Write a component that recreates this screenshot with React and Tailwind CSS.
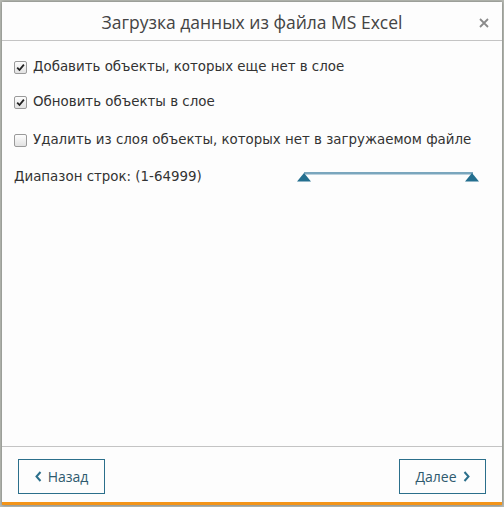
import React from "react";

function Check({ checked }) {
  return (
    <span className="w-[13px] h-[13px] shrink-0 rounded-[2px] border border-[#9a9a9a] bg-gradient-to-b from-[#fdfdfd] to-[#e2e2e2] flex items-center justify-center">
      {checked && (
        <svg width="9" height="9" viewBox="0 0 9 9">
          <path d="M1.2 4.6 L3.5 7 L7.9 1.6" fill="none" stroke="#222" strokeWidth="1.8" />
        </svg>
      )}
    </span>
  );
}

function Row({ checked, children, className }) {
  return (
    <div className={"flex items-center gap-[6px] h-[20px] " + className}>
      <Check checked={checked} />
      <span>{children}</span>
    </div>
  );
}

export default function App() {
  return (
    <div className="w-[504px] h-[507px] bg-[#b9bcb5] p-[2px] pb-[2px]" style={{ fontFamily: "'DejaVu Sans', Verdana, sans-serif" }}>
      <div className="w-[500px] h-[503px] bg-[#fdfdfd] flex flex-col shadow-[0_0_3px_rgba(0,0,0,0.4)]">
        <div className="h-[39px] border-b border-[#c4c4c4] flex items-center justify-center relative shrink-0">
          <span className="text-[17.5px] text-[#444] pt-[3px]" style={{ fontFamily: "'Open Sans', sans-serif" }}>
            Загрузка данных из файла MS Excel
          </span>
          <svg className="absolute right-[13px] top-[16px]" width="10" height="10" viewBox="0 0 10 10">
            <path d="M1 1 L9 9 M9 1 L1 9" stroke="#8a8a8a" strokeWidth="1.8" />
          </svg>
        </div>
        <div className="flex-1 px-[12px] text-[13.4px] text-[#333]">
          <Row checked className="mt-[16px]">Добавить объекты, которых еще нет в слое</Row>
          <Row checked className="mt-[15px]">Обновить объекты в слое</Row>
          <Row className="mt-[18px]">Удалить из слоя объекты, которых нет в загружаемом файле</Row>
          <div className="mt-[17px] h-[20px] flex items-center justify-between">
            <span>Диапазон строк: (1-64999)</span>
            <svg width="183" height="11" viewBox="0 0 183 11" className="mr-[10px] mt-[1px]">
              <rect x="7" y="0" width="169" height="2.5" fill="#7aa6bd" />
              <polygon points="0,9.5 7,1 14,9.5" fill="#246f8f" />
              <polygon points="168,9.5 175,1 182,9.5" fill="#246f8f" />
            </svg>
          </div>
        </div>
        <div className="h-[56px] border-t border-[#c4c4c4] flex items-start justify-between px-[16px] pt-[12px] shrink-0" style={{ fontFamily: "'Open Sans', sans-serif" }}>
          <button className="w-[87px] h-[35px] border border-[#2b6f8b] flex items-center justify-center gap-[6px] text-[14px] text-[#2f5a6e]">
            <svg width="7" height="11" viewBox="0 0 7 11"><path d="M5.5 1 L1.5 5.5 L5.5 10" fill="none" stroke="#2b6f8b" strokeWidth="2" /></svg>
            Назад
          </button>
          <button className="w-[87px] h-[35px] border border-[#2b6f8b] flex items-center justify-center gap-[6px] text-[14px] text-[#2f5a6e]">
            Далее
            <svg width="7" height="11" viewBox="0 0 7 11"><path d="M1.5 1 L5.5 5.5 L1.5 10" fill="none" stroke="#2b6f8b" strokeWidth="2" /></svg>
          </button>
        </div>
        <div className="h-[3px] bg-[#f39419] shrink-0" />
      </div>
    </div>
  );
}
